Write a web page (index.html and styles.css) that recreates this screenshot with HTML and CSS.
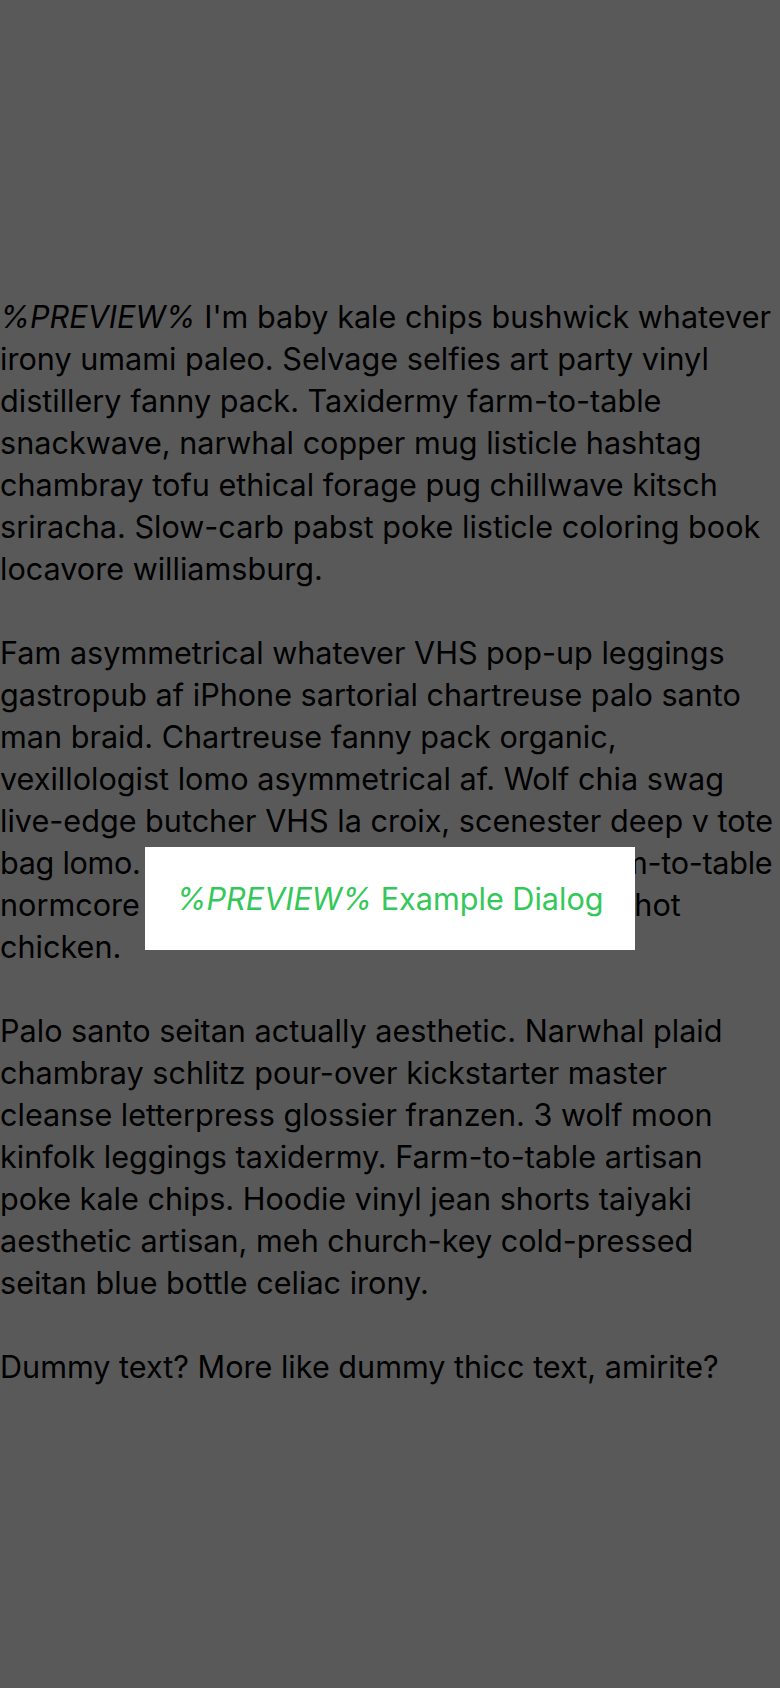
FILE: index.html
```html
<!DOCTYPE html>
<html>
<head>
<meta charset="utf-8">
<link rel="stylesheet" href="styles.css">
</head>
<body>
<main class="content">
  <p><em>%PREVIEW%</em> I'm baby kale chips bushwick whatever irony umami paleo. Selvage selfies art party vinyl distillery fanny pack. Taxidermy farm-to-table snackwave, narwhal copper mug listicle hashtag chambray tofu ethical forage pug chillwave kitsch sriracha. Slow-carb pabst poke listicle coloring book locavore williamsburg.</p>
  <p>Fam asymmetrical whatever VHS pop-up leggings gastropub af iPhone sartorial chartreuse palo santo man braid. Chartreuse fanny pack organic, vexillologist lomo asymmetrical af. Wolf chia swag live-edge butcher VHS la croix, scenester deep v tote <span class="tight">bag lomo. Sriracha tacos tousled, cronut farm-to-table</span> normcore pok pok typewriter chia cornhole hot chicken.</p>
  <p>Palo santo seitan actually aesthetic. Narwhal plaid chambray schlitz pour-over kickstarter master cleanse letterpress glossier franzen. 3 wolf moon kinfolk leggings taxidermy. Farm-to-table artisan poke kale chips. Hoodie vinyl jean shorts taiyaki aesthetic artisan, meh church-key cold-pressed seitan blue bottle celiac irony.</p>
  <p>Dummy text? More like dummy thicc text, amirite?</p>
</main>
<div class="backdrop">
  <div class="dialog"><span class="dialog-text"><em>%PREVIEW%</em> Example Dialog</span></div>
</div>
</body>
</html>
```

FILE: styles.css
```css
html, body {
  margin: 0;
  padding: 0;
}
body {
  background: #ffffff;
  width: 780px;
  height: 1688px;
  font-family: Inter, "Noto Sans", sans-serif;
  color: #000;
}
.content {
  padding-top: 296px;
}
.content p {
  margin: 0 0 42px 0;
  font-size: 30.6px;
  line-height: 42px;
}
.tight {
  letter-spacing: -0.3px;
}
.backdrop {
  position: fixed;
  inset: 0;
  background: rgba(0, 0, 0, 0.65);
  display: flex;
  justify-content: center;
  align-items: flex-start;
  padding-top: 847px;
  box-sizing: border-box;
}
.dialog {
  width: 490px;
  height: 103px;
  background: #fff;
  color: #34c759;
  font-size: 30.6px;
  display: flex;
  align-items: center;
  justify-content: center;
}
```
